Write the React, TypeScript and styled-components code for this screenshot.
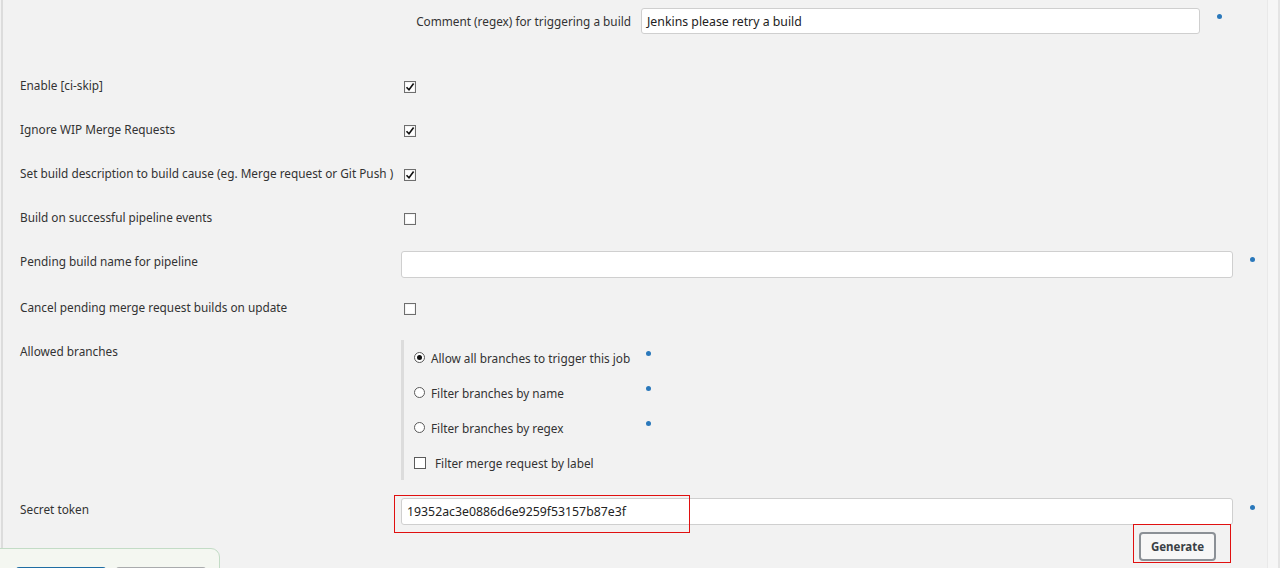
import React from "react";
import styled, { createGlobalStyle } from "styled-components";

const Global = createGlobalStyle`
  html, body { margin: 0; padding: 0; }
  body {
    background: #f2f2f2;
    font-family: "Noto Sans", "Open Sans", sans-serif;
    font-size: 11.8px;
    color: #333;
    overflow: hidden;
  }
`;

const Page = styled.div`
  position: relative;
  display: flex;
  width: 1280px;
  height: 568px;
  overflow: hidden;
  background: #f2f2f2;
`;

const Main = styled.div`
  flex: 1;
  margin-left: 1px;
  border-left: 2px solid #dcdcdc;
  display: flex;
  flex-direction: column;
  overflow: hidden;
`;

const RightGutter = styled.div`
  width: 10px;
  border-left: 1px solid #e9e9e9;
  background: #f6f6f6;
  border-right: 2px solid #e4e4e4;
`;

const CommentRow = styled.div`
  flex-shrink: 0;
  display: grid;
  grid-template-columns: 628px 559px 1fr;
  column-gap: 10px;
  padding: 8px 0 31px;
  align-items: center;
`;

const RightLabel = styled.div`
  text-align: right;
  line-height: 26px;
`;

const FormRow = styled.div<{ $h: number }>`
  flex-shrink: 0;
  display: grid;
  grid-template-columns: 381px 832px 1fr;
  padding-left: 17px;
  height: ${(p) => p.$h}px;
  box-sizing: border-box;
  padding-top: 10px;
`;

const Label = styled.div`
  line-height: 20px;
`;

const Control = styled.div`
  position: relative;
`;

const HelpCell = styled.div<{ $top: number; $left?: number }>`
  align-self: start;
  padding-top: ${(p) => p.$top}px;
  padding-left: ${(p) => p.$left ?? 17}px;
`;

const HelpDot = styled.span`
  display: block;
  width: 5px;
  height: 5px;
  border-radius: 50%;
  background: #2a78bb;
`;

const TextInput = styled.div<{ $h?: number }>`
  box-sizing: border-box;
  width: 100%;
  height: ${(p) => p.$h ?? 27}px;
  background: #fff;
  border: 1px solid #cfcfcf;
  border-radius: 3px;
  padding: 1px 5px 0;
  line-height: ${(p) => (p.$h ?? 27) - 3}px;
  font-size: 12.3px;
  color: #222;
`;

const CheckBoxBox = styled.span<{ $mt?: number }>`
  box-sizing: border-box;
  display: inline-flex;
  align-items: center;
  justify-content: center;
  width: 12px;
  height: 12px;
  margin-top: ${(p) => p.$mt ?? 0}px;
  margin-left: 3px;
  border: 1px solid #6e6e6e;
  background: #fff;
  box-shadow: inset 0 0 0 1px #f4f4f4;
`;

const Check = ({ checked, mt }: { checked?: boolean; mt?: number }) => (
  <CheckBoxBox $mt={mt}>
    {checked && (
      <svg width="10" height="10" viewBox="0 0 10 10">
        <path d="M1.5 5.2 L4 7.8 L8.6 1.6" fill="none" stroke="#111" strokeWidth="1.6" />
      </svg>
    )}
  </CheckBoxBox>
);

const BranchBlock = styled.div`
  margin-top: -1px;
  height: 140px;
  border-left: 3px solid #dcdcdc;
  display: flex;
  flex-direction: column;
`;

const BranchItem = styled.div`
  display: grid;
  grid-template-columns: 232px 1fr;
  height: 35px;
  padding-left: 10px;
  align-items: center;
`;

const BranchLabel = styled.label<{ $gap: number }>`
  display: flex;
  align-items: center;
  gap: ${(p) => p.$gap}px;
  line-height: 20px;
`;

const RadioCircle = styled.span<{ $on?: boolean }>`
  box-sizing: border-box;
  width: 11px;
  height: 11px;
  border-radius: 50%;
  border: 1px solid #5a5a5a;
  background: #fff;
  display: inline-flex;
  align-items: center;
  justify-content: center;
  &::after {
    content: "";
    display: ${(p) => (p.$on ? "block" : "none")};
    width: 5px;
    height: 5px;
    border-radius: 50%;
    background: #111;
  }
`;

const SmallBox = styled.span`
  box-sizing: border-box;
  width: 12px;
  height: 12px;
  border: 1px solid #5a5a5a;
  background: #fff;
`;

const BranchDot = styled(HelpDot)`
  align-self: start;
  margin-top: 11px;
`;

const SecretControl = styled(Control)`
  margin-top: -1px;
  display: flex;
  flex-direction: column;
`;

const ButtonRow = styled.div`
  display: flex;
  justify-content: flex-end;
  padding-right: 17px;
  margin-top: 7px;
`;

const GenerateButton = styled.button`
  box-sizing: border-box;
  width: 77px;
  height: 29px;
  border: 2px solid #8b9096;
  border-radius: 4px;
  background: #f7f7f7;
  font-family: "Noto Sans", sans-serif;
  font-weight: 700;
  font-size: 11.5px;
  color: #3a3f45;
  padding: 0;
`;

const RedBox = styled.div<{ $l: number; $t: number; $w: number; $h: number }>`
  position: absolute;
  left: ${(p) => p.$l}px;
  top: ${(p) => p.$t}px;
  width: ${(p) => p.$w}px;
  height: ${(p) => p.$h}px;
  box-sizing: border-box;
  border: 1px solid #e01010;
  pointer-events: none;
`;

const BottomBar = styled.div`
  position: absolute;
  left: -1px;
  top: 548px;
  width: 221px;
  height: 40px;
  box-sizing: border-box;
  border: 1px solid #c3dcc6;
  border-top-right-radius: 9px;
  background: #f4f7f1;
  display: flex;
  gap: 10px;
  padding: 18px 0 0 16px;
`;

const BarButton = styled.div<{ $c: string }>`
  width: 90px;
  height: 20px;
  border-radius: 3px;
  background: ${(p) => p.$c};
`;

const checkRows = [
  { label: "Enable [ci-skip]", checked: true },
  { label: "Ignore WIP Merge Requests", checked: true },
  { label: "Set build description to build cause (eg. Merge request or Git Push )", checked: true },
  { label: "Build on successful pipeline events", checked: false },
];

export default function App() {
  return (
    <>
      <Global />
      <Page>
        <Main>
          <CommentRow>
            <RightLabel>Comment (regex) for triggering a build</RightLabel>
            <TextInput $h={26}>Jenkins please retry a build</TextInput>
            <HelpCell $top={6} $left={7}>
              <HelpDot />
            </HelpCell>
          </CommentRow>

          {checkRows.map((r) => (
            <FormRow $h={44} key={r.label}>
              <Label>{r.label}</Label>
              <Control>
                <Check checked={r.checked} mt={6} />
              </Control>
            </FormRow>
          ))}

          <FormRow $h={46}>
            <Label>Pending build name for pipeline</Label>
            <Control>
              <TextInput />
            </Control>
            <HelpCell $top={6}>
              <HelpDot />
            </HelpCell>
          </FormRow>

          <FormRow $h={44}>
            <Label>Cancel pending merge request builds on update</Label>
            <Control>
              <Check mt={6} />
            </Control>
          </FormRow>

          <FormRow $h={158}>
            <Label>Allowed branches</Label>
            <Control>
              <BranchBlock>
                <BranchItem>
                  <BranchLabel $gap={6}>
                    <RadioCircle $on />
                    Allow all branches to trigger this job
                  </BranchLabel>
                  <BranchDot />
                </BranchItem>
                <BranchItem>
                  <BranchLabel $gap={6}>
                    <RadioCircle />
                    Filter branches by name
                  </BranchLabel>
                  <BranchDot />
                </BranchItem>
                <BranchItem>
                  <BranchLabel $gap={6}>
                    <RadioCircle />
                    Filter branches by regex
                  </BranchLabel>
                  <BranchDot />
                </BranchItem>
                <BranchItem>
                  <BranchLabel $gap={9}>
                    <SmallBox />
                    Filter merge request by label
                  </BranchLabel>
                </BranchItem>
              </BranchBlock>
            </Control>
          </FormRow>

          <FormRow $h={90}>
            <Label>Secret token</Label>
            <SecretControl>
              <TextInput>19352ac3e0886d6e9259f53157b87e3f</TextInput>
              <ButtonRow>
                <GenerateButton>Generate</GenerateButton>
              </ButtonRow>
              <RedBox $l={-7} $t={-3} $w={296} $h={38} />
              <RedBox $l={732} $t={26} $w={98} $h={39} />
            </SecretControl>
            <HelpCell $top={6}>
              <HelpDot />
            </HelpCell>
          </FormRow>
        </Main>
        <RightGutter />
        <BottomBar>
          <BarButton $c="#1f6da3" />
          <BarButton $c="#a9abad" />
        </BottomBar>
      </Page>
    </>
  );
}
